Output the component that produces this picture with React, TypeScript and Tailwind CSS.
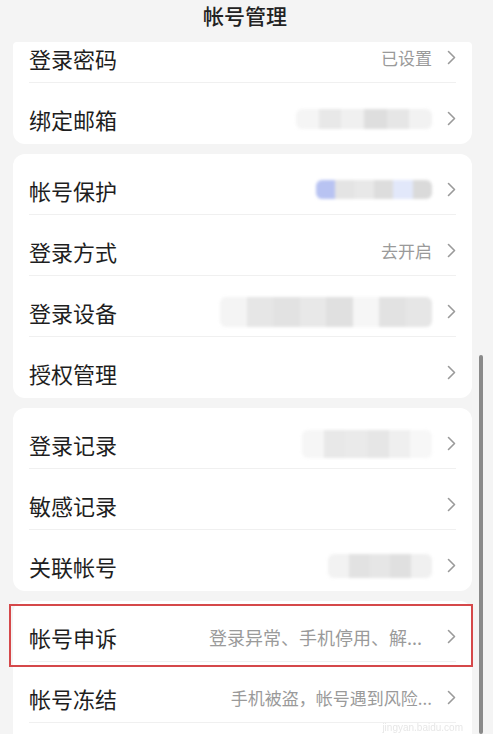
import React from "react";

type Row = {
  label: string;
  value?: string;
  blur?: string[];
  blurW?: number;
  blurH?: number;
  valueClass?: string;
};

function Chevron() {
  return (
    <svg width="9" height="15" viewBox="0 0 9 15" className="shrink-0">
      <polyline points="1.5,1.5 7.5,7.5 1.5,13.5" fill="none" stroke="#9a9a9a" strokeWidth="1.6" strokeLinecap="round" strokeLinejoin="round" />
    </svg>
  );
}

// mosaic-looking blurred value, like the redacted bits in the screenshot
function Mosaic({ colors, w, h }: { colors: string[]; w: number; h: number }) {
  return (
    <div className="flex overflow-hidden rounded-md blur-[1.5px]" style={{ width: w, height: h }}>
      {colors.map((c, i) => (
        <div key={i} className="h-full flex-1" style={{ background: c }} />
      ))}
    </div>
  );
}

function ListRow({ row, last, first }: { row: Row; last?: boolean; first?: boolean }) {
  return (
    <div className={first ? "h-[41px] flex items-center pb-[10px] px-4 relative" : "h-[61px] flex items-center pt-[10px] px-4 relative"}>
      <span className="text-[22px] text-[#1e1e1e] leading-none">{row.label}</span>
      <div className="ml-auto flex items-center gap-[15px] min-w-0">
        {row.value && (
          <span className={"text-[#9a9a9a] leading-none whitespace-nowrap " + (row.valueClass ?? "text-[17px]")}>{row.value}</span>
        )}
        {row.blur && <Mosaic colors={row.blur} w={row.blurW ?? 120} h={row.blurH ?? 20} />}
        <Chevron />
      </div>
      {!last && <div className="absolute left-4 right-4 bottom-0 h-px bg-[#f0f0f0]" />}
    </div>
  );
}

function Card({ rows, cropTop }: { rows: Row[]; cropTop?: boolean }) {
  return (
    <div className={(cropTop ? "rounded-b-xl rounded-t-[4px]" : "rounded-xl") + " bg-white relative"}>
      {rows.map((r, i) => (
        <ListRow key={r.label} row={r} first={cropTop && i === 0} last={i === rows.length - 1} />
      ))}
    </div>
  );
}

export default function App() {
  return (
    <div className="relative w-[493px] h-[734px] overflow-hidden bg-[#f4f4f4] font-['Noto_Sans_CJK_SC','Noto_Sans',sans-serif]">
      <div className="h-[42px] flex items-center justify-center pb-[10px] pr-[3px]">
        <span className="text-[21px] text-[#222] font-medium">帐号管理</span>
      </div>

      <div className="pl-[13px] pr-[21px] flex flex-col gap-[10px]">
        <Card
          cropTop
          rows={[
            { label: "登录密码", value: "已设置" },
            { label: "绑定邮箱", blur: ["#f5f5f5", "#e8e8e8", "#f0f0f0", "#dedede", "#e6e6e6", "#f2f2f2"], blurW: 136, blurH: 20 },
          ]}
        />
        <Card
          rows={[
            { label: "帐号保护", blur: ["#b8c3f2", "#e4e4e4", "#e8e8e8", "#dddddd", "#e2e8fa", "#dadada"], blurW: 116, blurH: 19 },
            { label: "登录方式", value: "去开启" },
            { label: "登录设备", blur: ["#f4f4f4", "#e6e6e6", "#e2e2e2", "#e8e8e8", "#e0e0e0", "#f6f6f6", "#e2e2e2", "#e6e6e6"], blurW: 212, blurH: 30 },
            { label: "授权管理" },
          ]}
        />
        <Card
          rows={[
            { label: "登录记录", blur: ["#f6f6f6", "#e8e8e8", "#eaeaea", "#e6e6e6", "#efefef", "#f7f7f7"], blurW: 130, blurH: 28 },
            { label: "敏感记录" },
            { label: "关联帐号", blur: ["#f2f2f2", "#e2e2e2", "#e6e6e6", "#e0e0e0", "#f0f0f0"], blurW: 104, blurH: 24 },
          ]}
        />
        <div className="rounded-xl bg-white relative">
          <div className="relative">
            <ListRow row={{ label: "帐号申诉", value: "登录异常、手机停用、解...", valueClass: "text-[18px] mr-[10px]" }} />
            <div className="absolute left-[-4px] right-[-1px] top-[3px] h-[63px] border-2 border-[#d5484a]" />
          </div>
          <ListRow row={{ label: "帐号冻结", value: "手机被盗，帐号遇到风险..." }} />
          <div className="h-[61px]" />
        </div>
      </div>

      {/* baidu jingyan watermark */}
      <div className="absolute right-[30px] top-[712px] opacity-70">
        <span className="text-[10px] leading-none text-[#dcdcdc] font-['Liberation_Sans',sans-serif]">jingyan.baidu.com</span>
      </div>

      {/* scrollbar */}
      <div className="absolute left-[479px] top-[355px] w-[4px] h-[379px] rounded-full bg-[#8a8a8a]" />
    </div>
  );
}
